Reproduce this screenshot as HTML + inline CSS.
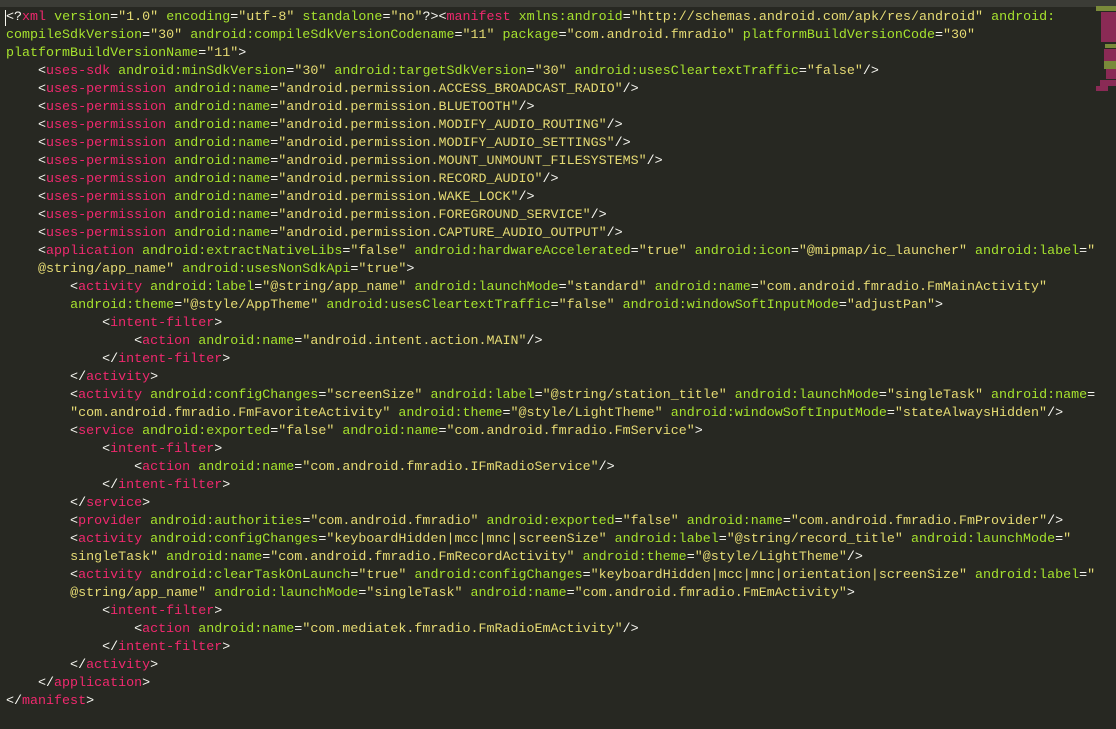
<!DOCTYPE html>
<html><head><meta charset="utf-8"><style>
html,body{margin:0;padding:0;width:1116px;height:729px;overflow:hidden;background:#272822;}
.top{position:absolute;left:0;top:0;width:1116px;height:7px;background:#3b3c36;}
pre{position:absolute;left:6px;top:9px;margin:0;font-family:"Liberation Mono",monospace;font-size:13.35px;line-height:18px;color:#f8f8f2;white-space:pre;}
.t{color:#f0286e}.a{color:#a6e22e}.s{color:#e6db74}
.mm{position:absolute;left:1096px;top:6px;width:20px;height:90px;}
.cur{position:absolute;left:5px;top:10px;width:1px;height:16px;background:#f8f8f0;}
</style></head><body>
<div class="top"></div>
<pre>&lt;?<span class="t">xml</span> <span class="a">version</span>=<span class="s">"1.0"</span> <span class="a">encoding</span>=<span class="s">"utf-8"</span> <span class="a">standalone</span>=<span class="s">"no"</span>?&gt;&lt;<span class="t">manifest</span> <span class="a">xmlns:android</span>=<span class="s">"http://schemas.android.com/apk/res/android"</span> <span class="a">android:</span>
<span class="a">compileSdkVersion</span>=<span class="s">"30"</span> <span class="a">android:compileSdkVersionCodename</span>=<span class="s">"11"</span> <span class="a">package</span>=<span class="s">"com.android.fmradio"</span> <span class="a">platformBuildVersionCode</span>=<span class="s">"30"</span>
<span class="a">platformBuildVersionName</span>=<span class="s">"11"</span>&gt;
    &lt;<span class="t">uses-sdk</span> <span class="a">android:minSdkVersion</span>=<span class="s">"30"</span> <span class="a">android:targetSdkVersion</span>=<span class="s">"30"</span> <span class="a">android:usesCleartextTraffic</span>=<span class="s">"false"</span>/&gt;
    &lt;<span class="t">uses-permission</span> <span class="a">android:name</span>=<span class="s">"android.permission.ACCESS_BROADCAST_RADIO"</span>/&gt;
    &lt;<span class="t">uses-permission</span> <span class="a">android:name</span>=<span class="s">"android.permission.BLUETOOTH"</span>/&gt;
    &lt;<span class="t">uses-permission</span> <span class="a">android:name</span>=<span class="s">"android.permission.MODIFY_AUDIO_ROUTING"</span>/&gt;
    &lt;<span class="t">uses-permission</span> <span class="a">android:name</span>=<span class="s">"android.permission.MODIFY_AUDIO_SETTINGS"</span>/&gt;
    &lt;<span class="t">uses-permission</span> <span class="a">android:name</span>=<span class="s">"android.permission.MOUNT_UNMOUNT_FILESYSTEMS"</span>/&gt;
    &lt;<span class="t">uses-permission</span> <span class="a">android:name</span>=<span class="s">"android.permission.RECORD_AUDIO"</span>/&gt;
    &lt;<span class="t">uses-permission</span> <span class="a">android:name</span>=<span class="s">"android.permission.WAKE_LOCK"</span>/&gt;
    &lt;<span class="t">uses-permission</span> <span class="a">android:name</span>=<span class="s">"android.permission.FOREGROUND_SERVICE"</span>/&gt;
    &lt;<span class="t">uses-permission</span> <span class="a">android:name</span>=<span class="s">"android.permission.CAPTURE_AUDIO_OUTPUT"</span>/&gt;
    &lt;<span class="t">application</span> <span class="a">android:extractNativeLibs</span>=<span class="s">"false"</span> <span class="a">android:hardwareAccelerated</span>=<span class="s">"true"</span> <span class="a">android:icon</span>=<span class="s">"@mipmap/ic_launcher"</span> <span class="a">android:label</span>=<span class="s">"</span>
    <span class="s">@string/app_name"</span> <span class="a">android:usesNonSdkApi</span>=<span class="s">"true"</span>&gt;
        &lt;<span class="t">activity</span> <span class="a">android:label</span>=<span class="s">"@string/app_name"</span> <span class="a">android:launchMode</span>=<span class="s">"standard"</span> <span class="a">android:name</span>=<span class="s">"com.android.fmradio.FmMainActivity"</span>
        <span class="a">android:theme</span>=<span class="s">"@style/AppTheme"</span> <span class="a">android:usesCleartextTraffic</span>=<span class="s">"false"</span> <span class="a">android:windowSoftInputMode</span>=<span class="s">"adjustPan"</span>&gt;
            &lt;<span class="t">intent-filter</span>&gt;
                &lt;<span class="t">action</span> <span class="a">android:name</span>=<span class="s">"android.intent.action.MAIN"</span>/&gt;
            &lt;/<span class="t">intent-filter</span>&gt;
        &lt;/<span class="t">activity</span>&gt;
        &lt;<span class="t">activity</span> <span class="a">android:configChanges</span>=<span class="s">"screenSize"</span> <span class="a">android:label</span>=<span class="s">"@string/station_title"</span> <span class="a">android:launchMode</span>=<span class="s">"singleTask"</span> <span class="a">android:name</span>=
        <span class="s">"com.android.fmradio.FmFavoriteActivity"</span> <span class="a">android:theme</span>=<span class="s">"@style/LightTheme"</span> <span class="a">android:windowSoftInputMode</span>=<span class="s">"stateAlwaysHidden"</span>/&gt;
        &lt;<span class="t">service</span> <span class="a">android:exported</span>=<span class="s">"false"</span> <span class="a">android:name</span>=<span class="s">"com.android.fmradio.FmService"</span>&gt;
            &lt;<span class="t">intent-filter</span>&gt;
                &lt;<span class="t">action</span> <span class="a">android:name</span>=<span class="s">"com.android.fmradio.IFmRadioService"</span>/&gt;
            &lt;/<span class="t">intent-filter</span>&gt;
        &lt;/<span class="t">service</span>&gt;
        &lt;<span class="t">provider</span> <span class="a">android:authorities</span>=<span class="s">"com.android.fmradio"</span> <span class="a">android:exported</span>=<span class="s">"false"</span> <span class="a">android:name</span>=<span class="s">"com.android.fmradio.FmProvider"</span>/&gt;
        &lt;<span class="t">activity</span> <span class="a">android:configChanges</span>=<span class="s">"keyboardHidden|mcc|mnc|screenSize"</span> <span class="a">android:label</span>=<span class="s">"@string/record_title"</span> <span class="a">android:launchMode</span>=<span class="s">"</span>
        <span class="s">singleTask"</span> <span class="a">android:name</span>=<span class="s">"com.android.fmradio.FmRecordActivity"</span> <span class="a">android:theme</span>=<span class="s">"@style/LightTheme"</span>/&gt;
        &lt;<span class="t">activity</span> <span class="a">android:clearTaskOnLaunch</span>=<span class="s">"true"</span> <span class="a">android:configChanges</span>=<span class="s">"keyboardHidden|mcc|mnc|orientation|screenSize"</span> <span class="a">android:label</span>=<span class="s">"</span>
        <span class="s">@string/app_name"</span> <span class="a">android:launchMode</span>=<span class="s">"singleTask"</span> <span class="a">android:name</span>=<span class="s">"com.android.fmradio.FmEmActivity"</span>&gt;
            &lt;<span class="t">intent-filter</span>&gt;
                &lt;<span class="t">action</span> <span class="a">android:name</span>=<span class="s">"com.mediatek.fmradio.FmRadioEmActivity"</span>/&gt;
            &lt;/<span class="t">intent-filter</span>&gt;
        &lt;/<span class="t">activity</span>&gt;
    &lt;/<span class="t">application</span>&gt;
&lt;/<span class="t">manifest</span>&gt;</pre>
<div class="cur"></div>
<svg class="mm" width="20" height="90">
<rect x="0" y="0" width="20" height="5" fill="#7a8a3a"/>
<rect x="5" y="6" width="15" height="30" fill="#8a2a55"/>
<rect x="9" y="38" width="11" height="4" fill="#7a8a3a"/>
<rect x="8" y="43" width="12" height="12" fill="#8a2a55"/>
<rect x="8" y="55" width="12" height="8" fill="#7a8a3a"/>
<rect x="10" y="63" width="10" height="10" fill="#8a2a55"/>
<rect x="4" y="74" width="16" height="6" fill="#8a2a55"/>
<rect x="0" y="80" width="12" height="5" fill="#8a2a55"/>
</svg>
</body></html>
